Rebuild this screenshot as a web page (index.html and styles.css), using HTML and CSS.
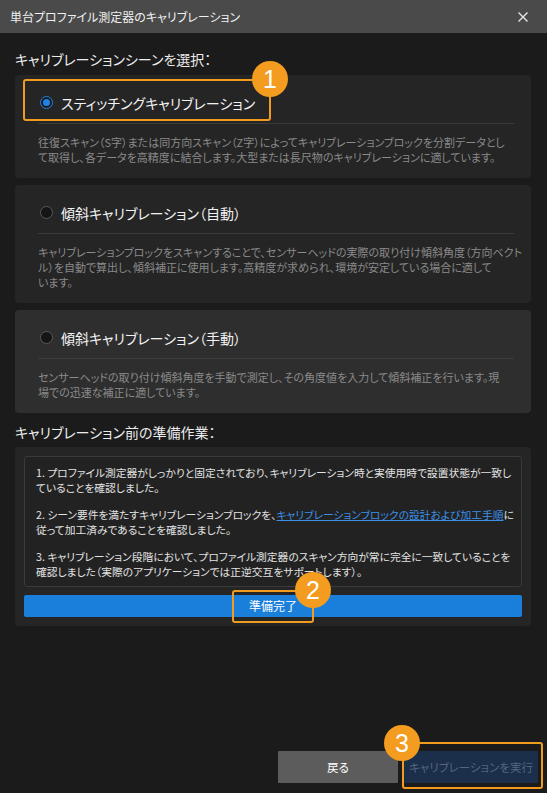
FILE: index.html
```html
<!DOCTYPE html>
<html lang="ja">
<head>
<meta charset="utf-8">
<title>単台プロファイル測定器のキャリブレーション</title>
<link rel="stylesheet" href="styles.css">
</head>
<body>
<div class="dialog">
  <header class="titlebar">
    <span class="title">単台プロファイル測定器のキャリブレーション</span>
    <svg class="close" width="12" height="12" viewBox="0 0 12 12" aria-label="閉じる">
      <path d="M1.5 1.5 L10.5 10.5 M10.5 1.5 L1.5 10.5" stroke="#e6e6e6" stroke-width="1.4" fill="none"/>
    </svg>
  </header>

  <main class="content">
    <h2 class="section-title">キャリブレーションシーンを選択：</h2>

    <section class="scene scene-selected">
      <div class="scene-head">
        <span class="radio radio-on"></span>
        <span class="scene-label">スティッチングキャリブレーション</span>
      </div>
      <p class="scene-desc">往復スキャン（S字）または同方向スキャン（Z字）によってキャリブレーションブロックを分割データとし<br>て取得し、各データを高精度に結合します。大型または長尺物のキャリブレーションに適しています。</p>
      <div class="mark mark-scene"><span class="step step-tr">1</span></div>
    </section>

    <section class="scene">
      <div class="scene-head">
        <span class="radio"></span>
        <span class="scene-label">傾斜キャリブレーション（自動）</span>
      </div>
      <p class="scene-desc">キャリブレーションブロックをスキャンすることで、センサーヘッドの実際の取り付け傾斜角度（方向ベクト<br>ル）を自動で算出し、傾斜補正に使用します。高精度が求められ、環境が安定している場合に適して<br>います。</p>
    </section>

    <section class="scene scene-hover">
      <div class="scene-head">
        <span class="radio"></span>
        <span class="scene-label">傾斜キャリブレーション（手動）</span>
      </div>
      <p class="scene-desc">センサーヘッドの取り付け傾斜角度を手動で測定し、その角度値を入力して傾斜補正を行います。現<br>場での迅速な補正に適しています。</p>
    </section>

    <h2 class="section-title section-title-2">キャリブレーション前の準備作業：</h2>

    <section class="prep">
      <div class="checklist">
        <p>1. プロファイル測定器がしっかりと固定されており、キャリブレーション時と実使用時で設置状態が一致し<br>ていることを確認しました。</p>
        <p>2. シーン要件を満たすキャリブレーションブロックを、<a href="#" class="link">キャリブレーションブロックの設計および加工手順</a>に<br>従って加工済みであることを確認しました。</p>
        <p>3. キャリブレーション段階において、プロファイル測定器のスキャン方向が常に完全に一致していることを<br>確認しました（実際のアプリケーションでは正逆交互をサポートします）。</p>
      </div>
      <button class="btn-ready" type="button">準備完了
        <span class="mark mark-ready"><span class="step step-tr">2</span></span>
      </button>
    </section>
  </main>

  <footer class="footer">
    <button class="btn btn-back" type="button">戻る</button>
    <div class="run-wrap">
      <button class="btn btn-run" type="button" disabled>キャリブレーションを実行</button>
      <span class="mark mark-run"><span class="step step-tl">3</span></span>
    </div>
  </footer>
</div>
</body>
</html>
```

FILE: styles.css
```css
* {
  box-sizing: border-box;
}

html, body {
  margin: 0;
  padding: 0;
  background: #1b1b1b;
}

body {
  font-family: "Noto Sans CJK JP", "Noto Sans", sans-serif;
  font-feature-settings: "palt";
  color: #e8e8e8;
}

.dialog {
  width: 547px;
  height: 793px;
  display: flex;
  flex-direction: column;
  background: #1b1b1b;
}

/* window title bar */
.titlebar {
  height: 33px;
  flex: none;
  background: #4a4a4a;
  display: flex;
  align-items: center;
  justify-content: space-between;
  padding: 0 18px 0 10px;
}

.title {
  font-size: 12px;
  line-height: 20px;
  color: #f0f0f0;
}

.close {
  display: block;
}

/* scrollable body */
.content {
  padding: 16px 16px 0 15px;
}

.section-title {
  margin: 0 0 6px;
  font-size: 14px;
  line-height: 20px;
  font-weight: normal;
  color: #ececec;
}

.section-title-2 {
  margin-top: 9px;
  margin-bottom: 5px;
}

/* scene option cards */
.scene {
  position: relative;
  background: #252525;
  border-radius: 4px;
  padding: 0 17px 0 23px;
  margin-bottom: 7px;
}

.scene-hover {
  background: #2e2e2e;
}

.scene-head {
  height: 49px;
  padding: 8px 0 1px;
  display: flex;
  align-items: center;
  border-bottom: 1px solid #3b3b3b;
}

.radio {
  width: 13px;
  height: 13px;
  border-radius: 50%;
  border: 1px solid #595959;
  background: #151515;
  margin-left: 2px;
  margin-right: 8px;
  flex: none;
  position: relative;
}

.radio-on {
  border: 1.5px solid #2083e4;
  background: #1b1b1b;
}

.radio-on::after {
  content: "";
  position: absolute;
  left: 50%;
  top: 50%;
  width: 7px;
  height: 7px;
  margin: -3.5px 0 0 -3.5px;
  border-radius: 50%;
  background: #2083e4;
}

.scene-label {
  font-size: 14px;
  line-height: 20px;
  color: #f2f2f2;
}

.scene-desc {
  margin: 0;
  padding: 11px 0 13px;
  font-size: 11px;
  line-height: 15px;
  color: #8a8a8a;
  white-space: nowrap;
}

/* numbered callouts */
.mark {
  position: absolute;
  border: 2px solid #f29c1f;
  border-radius: 3px;
  pointer-events: none;
}

.mark-scene {
  left: 8px;
  top: 4px;
  width: 248px;
  height: 42px;
}

.step {
  position: absolute;
  width: 36px;
  height: 36px;
  border-radius: 50%;
  background: #f39c1f;
  color: #ffffff;
  font-family: "Liberation Sans", Arial, sans-serif;
  font-feature-settings: normal;
  font-size: 25px;
  line-height: 36px;
  text-align: center;
}

.step-tr {
  right: -19px;
  top: -20px;
}

.step-tl {
  left: -20px;
  top: -19px;
}

/* preparation checklist */
.prep {
  background: #252525;
  border-radius: 4px;
  padding: 9px;
}

.checklist {
  border: 1px solid #3a3a3a;
  border-radius: 3px;
  background: #222222;
  padding: 8px 11px 7px;
}

.checklist p {
  margin: 0 0 12px;
  font-size: 10.75px;
  line-height: 15px;
  color: #e2e2e2;
  white-space: nowrap;
}

.checklist p:last-child {
  margin-bottom: 0;
}

.link {
  color: #3b8fe6;
  text-decoration: underline;
}

.btn-ready {
  position: relative;
  display: block;
  width: 100%;
  height: 22px;
  margin-top: 8px;
  border: none;
  border-radius: 2px;
  background: #1a7edb;
  color: #ffffff;
  font-family: inherit;
  font-feature-settings: "palt";
  font-size: 12px;
  line-height: 22px;
  padding: 0;
}

.mark-ready {
  left: calc(50% - 41px);
  width: 82px;
  top: -5px;
  bottom: -6px;
}

/* dialog buttons */
.footer {
  margin-top: auto;
  display: flex;
  justify-content: flex-end;
  gap: 6px;
  padding: 0 9px 10px 0;
}

.btn {
  height: 32px;
  border: none;
  border-radius: 1px;
  font-family: inherit;
  font-feature-settings: "palt";
  font-size: 11.5px;
  padding: 0;
}

.btn-back {
  width: 120px;
  background: #5c5c5c;
  color: #ffffff;
}

.run-wrap {
  position: relative;
}

.btn-run {
  width: 134px;
  background: #1b2f4a;
  color: #53667f;
}

.mark-run {
  left: -2px;
  right: -5px;
  top: -9px;
  bottom: -6px;
}
```
